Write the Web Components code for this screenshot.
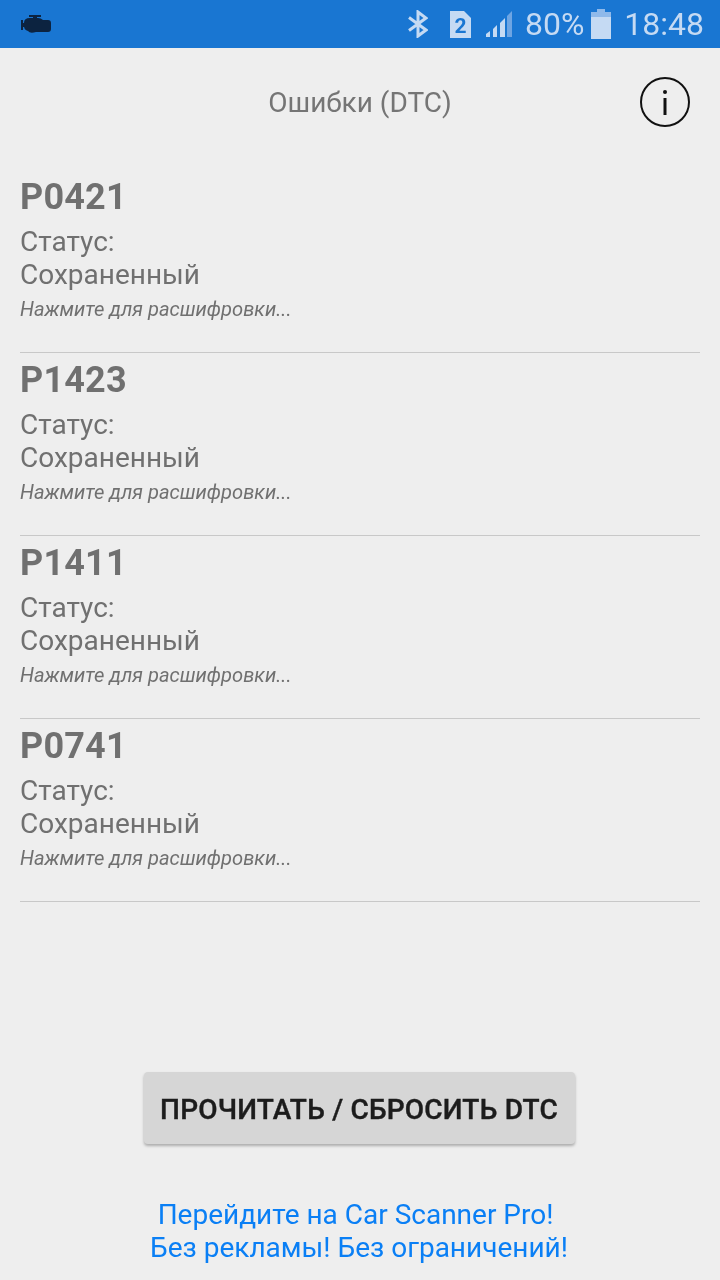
<!DOCTYPE html>
<html lang="ru">
<head>
<meta charset="utf-8">
<title>Ошибки (DTC)</title>
<style>
html, body { margin: 0; padding: 0; }
body { width: 720px; height: 1280px; background: #eeeeee; font-family: Roboto, "Noto Sans", sans-serif; overflow: hidden; }
</style>
</head>
<body>
<app-screen>
  <status-bar></status-bar>
  <title-bar>Ошибки (DTC)</title-bar>
  <dtc-list>
    <dtc-item code="P0421"></dtc-item>
    <dtc-item code="P1423"></dtc-item>
    <dtc-item code="P1411"></dtc-item>
    <dtc-item code="P0741"></dtc-item>
  </dtc-list>
  <read-button>Прочитать / сбросить DTC</read-button>
  <promo-link>Перейдите на Car Scanner Pro! <br>Без рекламы! Без ограничений!</promo-link>
</app-screen>

<script>
//small helper, every component does the same thing
const define = (name, html, init) => {
  customElements.define(name, class extends HTMLElement {
    constructor() {
      super();
      this.attachShadow({ mode: "open" }).innerHTML = html;
    }
    connectedCallback() {
      if (init) init(this);
    }
  });
};

define("app-screen", `
<style>
:host { display: flex; flex-direction: column; height: 1280px; will-change: transform; }
</style>
<slot></slot>
`);

define("status-bar", `
<style>
:host { display: flex; align-items: center; height: 48px; background: #1976d2; color: #c5daf3; font: 32px/48px Roboto, sans-serif; }
svg { display: block; flex: none; }
.engine { margin-left: 21px; }
.spacer { flex: 1; }
.bt { margin-right: 22px; }
.sim { margin-right: 15px; }
.signal { margin-right: 13px; }
.pct { margin-right: 7px; }
.batt { margin-right: 13px; }
.time { margin-right: 16px; }
</style>
<svg class="engine" width="31" height="19" viewBox="0 0 31 19" fill="#0c2340">
  <rect x="0" y="5" width="2" height="10"/>
  <rect x="2" y="8" width="2" height="4"/>
  <rect x="8" y="0" width="12" height="2"/>
  <rect x="12" y="2" width="4" height="2"/>
  <path d="M3 8 Q3 3 9 3 H17 Q20 3 22 5 H27 Q30 5 30 8 V14 Q30 17 27 17 H15 Q9 19 7 16 Q3 15 3 11 Z"/>
</svg>
<span class="spacer"></span>
<svg class="bt" width="20" height="28" viewBox="0 0 20 28" fill="none" stroke="#c5daf3" stroke-width="3">
  <path d="M1 7.5 L18 20 L10 26 V2 L18 8 L1 20.5"/>
</svg>
<svg class="sim" width="21" height="27" viewBox="0 0 21 27">
  <path d="M0 0 H14 L21 7 V27 H0 Z" fill="#c5daf3"/>
  <text x="10.5" y="22" text-anchor="middle" font-family="Roboto, sans-serif" font-weight="700" font-size="21" fill="#1976d2">2</text>
</svg>
<svg class="signal" width="26" height="26" viewBox="0 0 26 26">
  <path d="M0 26 V23 L4 20 V26 Z" fill="#c5daf3"/>
  <path d="M7 26 V18 L11 14 V26 Z" fill="#c5daf3"/>
  <path d="M14 26 V12 L19 7 V26 Z" fill="#c5daf3"/>
  <path d="M21 26 V5 L26 0 V26 Z" fill="#6ea5e3"/>
</svg>
<span class="pct">80%</span>
<svg class="batt" width="20" height="30" viewBox="0 0 20 30">
  <path d="M6 0 H14 V3 H20 V30 H0 V3 H6 Z" fill="#c5daf3"/>
  <path d="M6 0 H14 V3 H20 V8 H0 V3 H6 Z" fill="#8fb9ea"/>
</svg>
<span class="time">18:48</span>
`);

define("title-bar", `
<style>
:host { display: block; position: relative; height: 110px; text-align: center; color: #757575; font: 28px/110px Roboto, sans-serif; }
svg { position: absolute; left: 640px; top: 29px; }
</style>
<slot></slot>
<svg width="50" height="50" viewBox="0 0 50 50">
  <circle cx="25" cy="25" r="24" fill="none" stroke="#111" stroke-width="2"/>
  <rect x="23.5" y="21" width="3" height="17" fill="#111"/>
  <circle cx="25" cy="15" r="2" fill="#111"/>
</svg>
`);

define("dtc-list", `
<style>
:host { display: block; padding: 12px 20px 0; flex: 1; }
</style>
<slot></slot>
`);

define("dtc-item", `
<style>
:host { display: block; height: 182px; border-bottom: 1px solid #c8c8c8; color: #707070; font-family: Roboto, sans-serif; }
.code { font-size: 36px; line-height: 54px; font-weight: 700; letter-spacing: .2px; }
.status { font-size: 28px; line-height: 33px; margin-top: 1px; }
.hint { font-size: 20.15px; line-height: 28px; font-style: italic; margin-top: 4px; }
</style>
<div class="code"></div>
<div class="status">Статус:<br>Сохраненный</div>
<div class="hint">Нажмите для расшифровки...</div>
`, (el) => {
  el.shadowRoot.querySelector(".code").textContent = el.getAttribute("code");
});

define("read-button", `
<style>
:host { display: block; align-self: center; width: 431px; height: 72px; background: #d6d6d6; border-radius: 4px;
  box-shadow: 0 2px 3px rgba(0,0,0,.28); color: #1c1c1c; text-align: center; text-transform: uppercase;
  font: 500 28px/75px Roboto, sans-serif; letter-spacing: .2px; -webkit-text-stroke: .4px #1c1c1c; margin: 0 2px 54px 0; }
</style>
<slot></slot>
`);

define("promo-link", `
<style>
:host { display: block; text-align: center; color: #0a7ff5; font: 28px/33px Roboto, sans-serif; margin-bottom: 16px; padding-right: 2px; }
slot { white-space: pre; }
</style>
<slot></slot>
`);
</script>
</body>
</html>
